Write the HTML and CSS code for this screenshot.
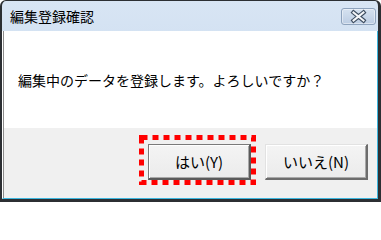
FILE: index.html
```html
<!DOCTYPE html>
<html lang="ja">
<head>
<meta charset="utf-8">
<title>編集登録確認</title>
<link rel="stylesheet" href="styles.css">
</head>
<body>
<div class="window">
  <div class="titlebar">
    <span class="title">編集登録確認</span>
    <button class="close" aria-label="閉じる">
      <svg width="35" height="17" viewBox="0 0 35 17">
        <path d="M12.5 4.5 L22.5 12.5 M22.5 4.5 L12.5 12.5" stroke="#3e4d60" stroke-width="4.2" stroke-linecap="square" fill="none"/>
        <path d="M12.5 4.5 L22.5 12.5 M22.5 4.5 L12.5 12.5" stroke="#f4f6f9" stroke-width="2" stroke-linecap="square" fill="none"/>
      </svg>
    </button>
  </div>
  <div class="frame">
    <div class="client">
      <div class="message">編集中のデータを登録します。よろしいですか？</div>
      <div class="footer">
        <span class="highlight-wrap">
          <button class="btn btn-default">はい(Y)</button>
          <svg class="highlight" width="117" height="50" viewBox="0 0 117 50">
            <rect x="2.5" y="2.5" width="112" height="45" fill="none" stroke="#ff0000" stroke-width="5" stroke-dasharray="6 5"/>
          </svg>
        </span>
        <button class="btn">いいえ(N)</button>
      </div>
    </div>
  </div>
</div>
</body>
</html>
```

FILE: styles.css
```css
html, body {
  margin: 0;
  padding: 0;
  background: #ffffff;
}

body {
  font-family: "Noto Sans CJK JP", "Noto Sans", sans-serif;
  color: #000;
}

.window {
  width: 381px;
  height: 202px;
  box-sizing: border-box;
  border-style: solid;
  border-color: #2c2f33;
  border-width: 1px 3px 3px 2px;
  border-radius: 6px 6px 0 0;
  background: linear-gradient(#d8e5f4, #bdd2ea);
  display: flex;
  flex-direction: column;
  overflow: hidden;
}

.titlebar {
  height: 30px;
  flex: none;
  display: flex;
  justify-content: space-between;
  align-items: flex-start;
  padding: 0 2px 0 8px;
}

.title {
  font-size: 14px;
  line-height: 30px;
  color: #000;
}

.close {
  margin-top: 7px;
  width: 35px;
  height: 17px;
  padding: 0;
  box-sizing: border-box;
  border: 1px solid #8ea3bd;
  border-radius: 3px;
  background: linear-gradient(#d6e2f0, #bccde3);
  box-shadow: inset 0 0 0 1px rgba(255,255,255,0.45);
  display: flex;
  align-items: center;
  justify-content: center;
}

.close svg {
  display: block;
  margin: -1px;
}

.frame {
  flex: 1;
  display: flex;
  border-left: 1px solid #ffffff;
  border-right: 1px solid #3cb6de;
  border-bottom: 1px solid #3cb6de;
  background: #ffffff;
}

.client {
  flex: 1;
  display: flex;
  flex-direction: column;
  border-left: 1px solid #8c8c8c;
}

.message {
  height: 97px;
  flex: none;
  background: #ffffff;
  display: flex;
  align-items: center;
  padding-left: 14px;
  font-size: 14px;
}

.footer {
  flex: 1;
  background: #f0f0f0;
  display: flex;
  justify-content: flex-end;
  align-items: flex-start;
  gap: 14px;
  padding: 16px 9px 0 0;
}

.btn {
  width: 103px;
  height: 36px;
  box-sizing: border-box;
  font-family: "Noto Sans CJK JP", "Noto Sans", sans-serif;
  font-size: 15px;
  color: #000;
  background: linear-gradient(#f4f4f4, #ebebeb);
  border-style: solid;
  border-width: 1px 2px 2px 1px;
  border-color: #e2e2e2 #6c6c6c #6c6c6c #e2e2e2;
  box-shadow: inset 1px 1px 0 #ffffff, inset -1px -1px 0 #a8a8a8;
  padding: 0;
}

.btn-default {
  border-color: #7a7a7a #5a5a5a #5a5a5a #7a7a7a;
}

.highlight-wrap {
  position: relative;
  display: block;
}

.highlight-wrap .btn {
  display: block;
}

.highlight {
  position: absolute;
  left: -9px;
  top: -9px;
  pointer-events: none;
}
```
